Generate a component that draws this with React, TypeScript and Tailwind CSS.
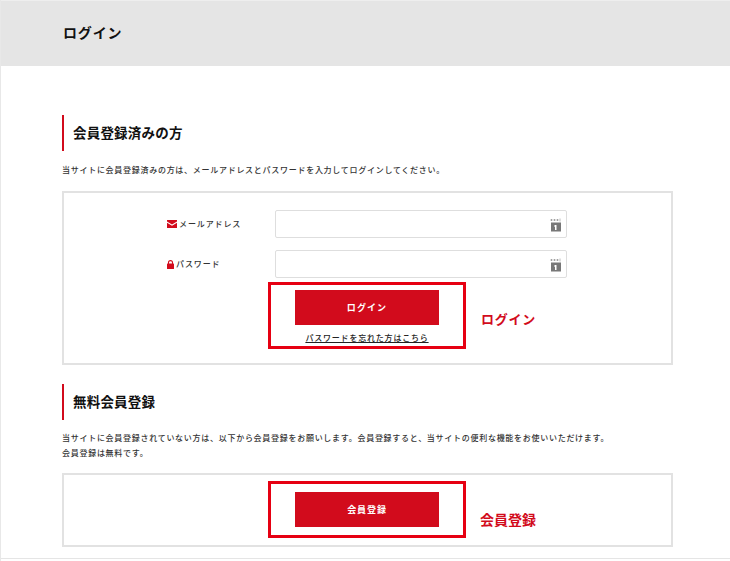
const FONT = "font-['Noto_Sans_CJK_JP','Liberation_Serif',serif]";

function KeyIcon() {
  return (
    <svg width="11" height="14" viewBox="0 0 11 14" className="absolute right-[5px] top-[7px]">
      <circle cx="1.5" cy="2" r="1" fill="#9a9a9a" />
      <circle cx="4.5" cy="2" r="1" fill="#9a9a9a" />
      <circle cx="7.5" cy="2" r="1" fill="#9a9a9a" />
      <path d="M10 .5v3" stroke="#bbb" strokeWidth="1" />
      <rect x="1" y="4.5" width="10" height="9" fill="#777" />
      <path d="M5 7h1.5v5H5z" fill="#fff" />
      <path d="M4 7.5h1.5v1H4z" fill="#fff" />
    </svg>
  );
}

function MailIcon() {
  return (
    <svg width="10" height="8" viewBox="0 0 10 8" className="mr-[2px]">
      <path d="M0 0h10v1.6L5 4.6 0 1.6z" fill="#d20b1c" />
      <path d="M0 2.8l5 3 5-3V8H0z" fill="#d20b1c" />
    </svg>
  );
}

function LockIcon() {
  return (
    <svg width="7" height="9" viewBox="0 0 7 9" className="mr-[2px]">
      <path d="M1.5 4V2.6a2 2 0 0 1 4 0V4" fill="none" stroke="#d20b1c" strokeWidth="1.1" />
      <rect y="3.6" width="7" height="5.4" rx=".6" fill="#d20b1c" />
    </svg>
  );
}

function Heading({ children }: { children: React.ReactNode }) {
  return (
    <h2 className="flex h-[36px] items-center border-l-2 border-[#d20b1c] pb-[2px] pl-[9px] text-[13.5px] font-bold tracking-[0.015em] text-[#111]">
      {children}
    </h2>
  );
}

function Field({ icon, label }: { icon: React.ReactNode; label: string }) {
  return (
    <div className="flex items-center">
      <div className="flex w-[108px] items-center text-[8px] font-medium tracking-[0.11em] text-[#333]">
        {icon}
        {label}
      </div>
      <div className="relative h-[28px] w-[292px] rounded-[2px] border border-[#dedede] bg-white">
        <KeyIcon />
      </div>
    </div>
  );
}

export default function App() {
  return (
    <div className={`h-[561px] w-[730px] overflow-hidden border-l border-[#e8e8e8] bg-white ${FONT}`}>
      <header className="flex h-[66px] items-center border-t border-[#eeeeee] bg-[#e5e5e5] pb-[2px] pl-[62px] text-[14px] font-bold tracking-[0.06em] text-[#111]">
        ログイン
      </header>

      <main className="pl-[61px] pr-[57px] pt-[49px]">
        <Heading>会員登録済みの方</Heading>
        <p className="mt-[12px] h-[13px] text-[8px] font-medium leading-[13px] tracking-[0.09em] text-[#333]">
          当サイトに会員登録済みの方は、メールアドレスとパスワードを入力してログインしてください。
        </p>

        <section className="mt-[15px] h-[174px] border-2 border-[#e2e2e2] pl-[103px] pt-[17px]">
          <div className="flex flex-col gap-[12px]">
            <Field icon={<MailIcon />} label="メールアドレス" />
            <Field icon={<LockIcon />} label="パスワード" />
          </div>
          <div className="relative ml-[128px] mt-[12px] w-[144px]">
            <div className="flex h-[35px] items-center justify-center bg-[#d20b1c] text-[9px] font-bold tracking-[0.12em] text-white">
              ログイン
            </div>
            <p className="mt-[6px] whitespace-nowrap text-center text-[8px] font-medium leading-[13px] tracking-[0.1em] text-[#222] underline underline-offset-1">
              パスワードを忘れた方はこちら
            </p>
            <div className="absolute -left-[27px] -top-[8px] h-[67px] w-[198px] border-[3px] border-[#e60012]" />
            <span className="absolute left-[186px] top-[19px] whitespace-nowrap text-[13px] font-bold tracking-[0.06em] text-[#d20b1c]">
              ログイン
            </span>
          </div>
        </section>

        <div className="mt-[19px]">
          <Heading>無料会員登録</Heading>
        </div>
        <p className="mt-[10px] text-[8px] font-medium leading-[15px] tracking-[0.09em] text-[#333]">
          当サイトに会員登録されていない方は、以下から会員登録をお願いします。会員登録すると、当サイトの便利な機能をお使いいただけます。
          <br />
          会員登録は無料です。
        </p>

        <section className="mt-[13px] h-[74px] border-2 border-[#e2e2e2] pl-[231px] pt-[17px]">
          <div className="relative w-[144px]">
            <div className="flex h-[35px] items-center justify-center bg-[#d20b1c] text-[9px] font-bold tracking-[0.1em] text-white">
              会員登録
            </div>
            <div className="absolute -left-[27px] -top-[11px] h-[57px] w-[198px] border-[3px] border-[#e60012]" />
            <span className="absolute left-[185px] top-[17px] whitespace-nowrap text-[14px] font-bold text-[#d20b1c]">
              会員登録
            </span>
          </div>
        </section>
      </main>

      <div className="mt-[11px] h-[1px] bg-[#e5e5e5]" />
    </div>
  );
}
